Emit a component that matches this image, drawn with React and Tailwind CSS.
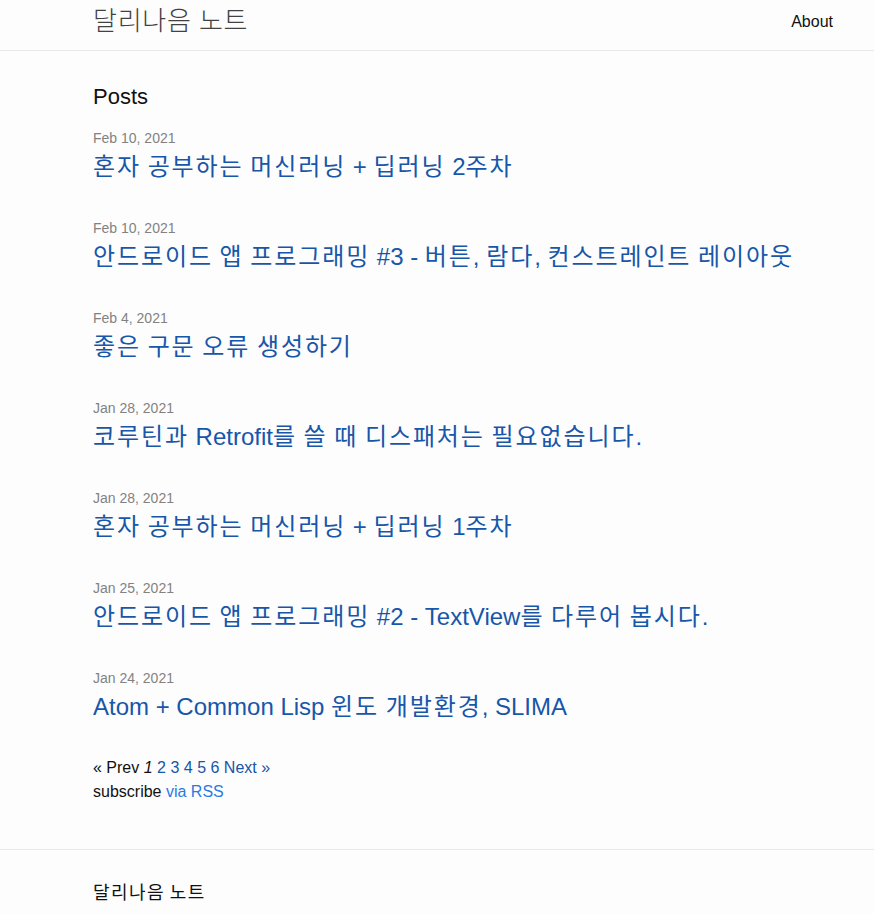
import React from 'react';

const posts = [
    { date: 'Feb 10, 2021', title: '혼자 공부하는 머신러닝 + 딥러닝 2주차' },
    { date: 'Feb 10, 2021', title: '안드로이드 앱 프로그래밍 #3 - 버튼, 람다, 컨스트레인트 레이아웃' },
    { date: 'Feb 4, 2021', title: '좋은 구문 오류 생성하기' },
    { date: 'Jan 28, 2021', title: '코루틴과 Retrofit를 쓸 때 디스패처는 필요없습니다.' },
    { date: 'Jan 28, 2021', title: '혼자 공부하는 머신러닝 + 딥러닝 1주차' },
    { date: 'Jan 25, 2021', title: '안드로이드 앱 프로그래밍 #2 - TextView를 다루어 봅시다.' },
    { date: 'Jan 24, 2021', title: 'Atom + Common Lisp 윈도 개발환경, SLIMA' },
];

const font = { fontFamily: '"Liberation Sans", "Noto Sans CJK KR", sans-serif' };

// 한글 구간만 자간을 넓혀 원본 폰트의 글자 폭에 맞춘다
const Hangul = ({ text, className }) => {
    const parts = text.split(/([\uAC00-\uD7A3]+)/);
    return parts.map((part, i) =>
        /[\uAC00-\uD7A3]/.test(part)
            ? <span key={i} className={className}>{part}</span>
            : <React.Fragment key={i}>{part}</React.Fragment>
    );
};

export default function App() {
    return (
        <div className="min-h-[914px] bg-[#fdfdfd] text-[#111111] text-[16px]" style={font}>
            {/* 헤더 */}
            <header className="h-[51px] border-b border-[#e8e8e8]">
                <div className="ml-[93px] mr-[41px] flex justify-between">
                    <a href="#" className="text-[26px] leading-[42px] font-light text-[#424242]">
                        <Hangul text="달리나음 노트" className="tracking-[0.75px]" />
                    </a>
                    <a href="#" className="leading-[44px] text-[#111111]">About</a>
                </div>
            </header>

            {/* 글 목록 */}
            <main className="ml-[93px] mr-[41px] pt-[31px]">
                <h2 className="text-[22px] leading-[30px]">Posts</h2>
                <ul className="mt-[16px]">
                    {posts.map((post, i) => (
                        <li key={i} className="mb-[35px] last:mb-0">
                            <div className="text-[14px] leading-[20px] text-[#828282]">{post.date}</div>
                            <a href="#" className="block mt-[3px] text-[24px] leading-[32px] text-[#1756a9]">
                                <Hangul text={post.title} className="tracking-[1.9px]" />
                            </a>
                        </li>
                    ))}
                </ul>

                <div className="mt-[33px] leading-[24px]">
                    <span>« Prev </span>
                    <em>1</em>
                    {' '}
                    {[2, 3, 4, 5, 6].map((n) => (
                        <span key={n}><a href="#" className="text-[#1756a9]">{n}</a> </span>
                    ))}
                    <a href="#" className="text-[#1756a9]">Next »</a>
                </div>
                <p className="leading-[24px]">
                    subscribe <a href="#" className="text-[#2a7ae2]">via RSS</a>
                </p>
            </main>

            {/* 푸터 */}
            <footer className="mt-[45px] border-t border-[#e8e8e8] pt-[31px]">
                <div className="ml-[93px] text-[18px] leading-[24px]">
                    <Hangul text="달리나음 노트" className="tracking-[1.4px]" />
                </div>
            </footer>
        </div>
    );
}
